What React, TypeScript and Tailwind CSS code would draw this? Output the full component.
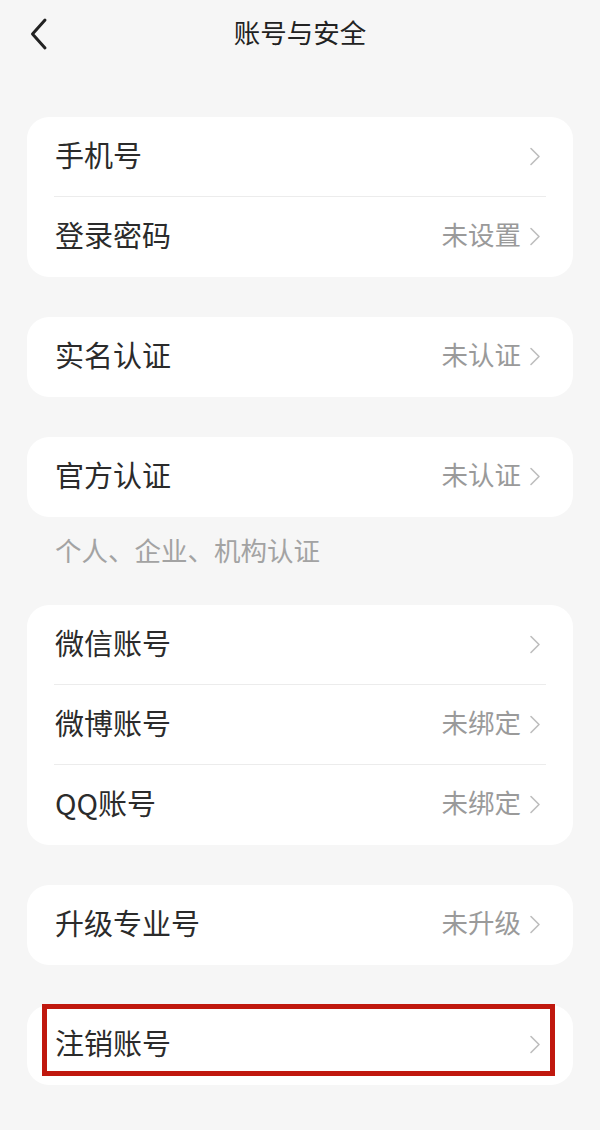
import type { ReactNode } from 'react'

const font = { fontFamily: '"Noto Sans CJK SC", "Noto Sans", sans-serif' }

function Chevron() {
  return (
    <svg width="12" height="19" viewBox="0 0 12 19" fill="none" className="shrink-0">
      <path d="M2 1.5 L10 9.5 L2 17.5" stroke="#bdbdbd" strokeWidth="1.6" strokeLinecap="round" strokeLinejoin="round" />
    </svg>
  )
}

function Row({ label, value, last }: { label: string; value?: string; last?: boolean }) {
  return (
    <div className="relative flex h-[80px] items-center justify-between pb-[5px] pl-[28px] pr-[32px]">
      <span className="text-[29px] leading-none text-[#2b2b2b]">{label}</span>
      <span className="flex items-center gap-[8px]">
        {value && <span className="text-[26.5px] leading-none text-[#9a9a9a]">{value}</span>}
        <span className="pt-[3px]">
          <Chevron />
        </span>
      </span>
      {!last && <div className="absolute bottom-0 left-[27px] right-[27px] h-px bg-[#ececec]" />}
    </div>
  )
}

function Card({ children, className = '' }: { children: ReactNode; className?: string }) {
  return <div className={`mx-[27px] rounded-[22px] bg-white ${className}`}>{children}</div>
}

export default function App() {
  return (
    <div className="min-h-[1130px] w-full bg-[#f6f6f6]" style={font}>
      <header className="relative flex h-[68px] items-center justify-center pb-[4px]">
        <svg width="20" height="34" viewBox="0 0 20 34" fill="none" className="absolute left-[29px] top-[17px]">
          <path d="M16 3 L3.5 17 L16 31" stroke="#222" strokeWidth="3" strokeLinecap="round" strokeLinejoin="round" />
        </svg>
        <h1 className="text-[26.5px] font-normal text-[#222]">账号与安全</h1>
      </header>

      <div className="flex flex-col pt-[49px]">
        <Card>
          <Row label="手机号" />
          <Row label="登录密码" value="未设置" last />
        </Card>

        <Card className="mt-[40px]">
          <Row label="实名认证" value="未认证" last />
        </Card>

        <Card className="mt-[40px]">
          <Row label="官方认证" value="未认证" last />
        </Card>
        <div className="flex h-[88px] items-center pb-[22px] pl-[55px] text-[26.5px] leading-none text-[#a3a3a3]">
          个人、企业、机构认证
        </div>

        <Card>
          <Row label="微信账号" />
          <Row label="微博账号" value="未绑定" />
          <Row label="QQ账号" value="未绑定" last />
        </Card>

        <Card className="mt-[40px]">
          <Row label="升级专业号" value="未升级" last />
        </Card>

        <Card className="relative mt-[40px]">
          <Row label="注销账号" last />
          <div className="pointer-events-none absolute left-[15px] right-[18px] top-[-1px] h-[72px] border-[5px] border-[#c0180e]" />
        </Card>
      </div>
    </div>
  )
}
